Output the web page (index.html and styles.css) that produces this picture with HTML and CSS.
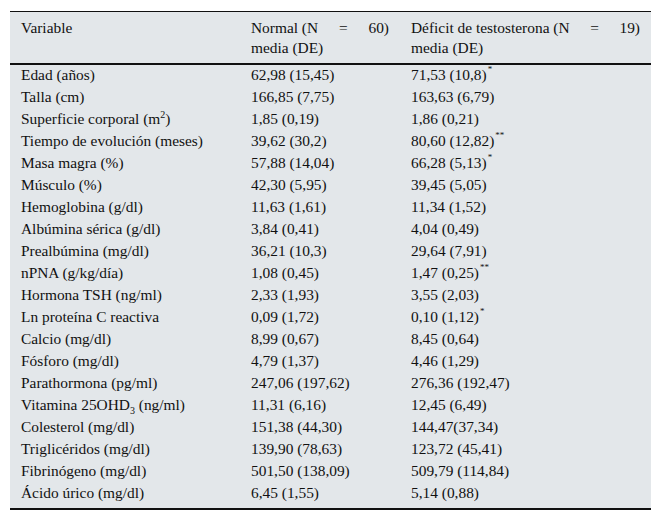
FILE: index.html
```html
<!DOCTYPE html>
<html lang="es">
<head>
<meta charset="utf-8">
<title>Tabla</title>
<link rel="stylesheet" href="styles.css">
</head>
<body>
<div class="wrap">
<table class="data">
  <colgroup>
    <col class="c1">
    <col class="c2">
    <col class="c3">
  </colgroup>
  <thead>
    <tr>
      <th>Variable</th>
      <th>
        <div class="spread"><span>Normal (N</span><span>=</span><span>60)</span></div>
        <div>media (DE)</div>
      </th>
      <th>
        <div class="spread"><span>Déficit de testosterona (N</span><span>=</span><span>19)</span></div>
        <div>media (DE)</div>
      </th>
    </tr>
  </thead>
  <tbody>
    <tr><td>Edad (años)</td><td>62,98 (15,45)</td><td>71,53 (10,8)<sup>*</sup></td></tr>
    <tr><td>Talla (cm)</td><td>166,85 (7,75)</td><td>163,63 (6,79)</td></tr>
    <tr><td>Superficie corporal (m<sup class="num">2</sup>)</td><td>1,85 (0,19)</td><td>1,86 (0,21)</td></tr>
    <tr><td>Tiempo de evolución (meses)</td><td>39,62 (30,2)</td><td>80,60 (12,82)<sup>**</sup></td></tr>
    <tr><td>Masa magra (%)</td><td>57,88 (14,04)</td><td>66,28 (5,13)<sup>*</sup></td></tr>
    <tr><td>Músculo (%)</td><td>42,30 (5,95)</td><td>39,45 (5,05)</td></tr>
    <tr><td>Hemoglobina (g/dl)</td><td>11,63 (1,61)</td><td>11,34 (1,52)</td></tr>
    <tr><td>Albúmina sérica (g/dl)</td><td>3,84 (0,41)</td><td>4,04 (0,49)</td></tr>
    <tr><td>Prealbúmina (mg/dl)</td><td>36,21 (10,3)</td><td>29,64 (7,91)</td></tr>
    <tr><td>nPNA (g/kg/día)</td><td>1,08 (0,45)</td><td>1,47 (0,25)<sup>**</sup></td></tr>
    <tr><td>Hormona TSH (ng/ml)</td><td>2,33 (1,93)</td><td>3,55 (2,03)</td></tr>
    <tr><td>Ln proteína C reactiva</td><td>0,09 (1,72)</td><td>0,10 (1,12)<sup>*</sup></td></tr>
    <tr><td>Calcio (mg/dl)</td><td>8,99 (0,67)</td><td>8,45 (0,64)</td></tr>
    <tr><td>Fósforo (mg/dl)</td><td>4,79 (1,37)</td><td>4,46 (1,29)</td></tr>
    <tr><td>Parathormona (pg/ml)</td><td>247,06 (197,62)</td><td>276,36 (192,47)</td></tr>
    <tr><td>Vitamina 25OHD<sub>3</sub> (ng/ml)</td><td>11,31 (6,16)</td><td>12,45 (6,49)</td></tr>
    <tr><td>Colesterol (mg/dl)</td><td>151,38 (44,30)</td><td>144,47(37,34)</td></tr>
    <tr><td>Triglicéridos (mg/dl)</td><td>139,90 (78,63)</td><td>123,72 (45,41)</td></tr>
    <tr><td>Fibrinógeno (mg/dl)</td><td>501,50 (138,09)</td><td>509,79 (114,84)</td></tr>
    <tr class="last"><td>Ácido úrico (mg/dl)</td><td>6,45 (1,55)</td><td>5,14 (0,88)</td></tr>
  </tbody>
</table>
</div>
</body>
</html>
```

FILE: styles.css
```css
html, body {
  margin: 0;
  padding: 0;
  background: #ffffff;
}

.wrap {
  padding: 11px 11px 0 10px;
}

.data {
  width: 641px;
  border-collapse: collapse;
  table-layout: fixed;
  background: #e3e7ea;
  color: #111111;
  font-family: "Liberation Serif", "Times New Roman", serif;
  font-size: 15.4px;
  border-top: 1px solid #111;
  border-bottom: 2px solid #111;
}

.c1 { width: 230px; }
.c2 { width: 160px; }
.c3 { width: 251px; }

.data th {
  font-weight: normal;
  text-align: left;
  vertical-align: top;
  line-height: 20px;
  padding: 6px 11px 5px 11px;
  border-bottom: 2px solid #111;
}

.spread {
  display: flex;
  justify-content: space-between;
  white-space: nowrap;
}

.data td {
  line-height: 16px;
  padding: 2px 11px 4px 11px;
  white-space: nowrap;
  vertical-align: top;
}

.data tr.last td {
  padding-bottom: 7px;
}

.data sup {
  font-size: 9px;
  line-height: 0;
  vertical-align: 8px;
  margin-left: 1px;
}

.data sup.num {
  font-size: 10px;
  vertical-align: 6px;
  margin-left: 0;
}

.data sub {
  font-size: 10px;
  line-height: 0;
  vertical-align: -4px;
}
```
